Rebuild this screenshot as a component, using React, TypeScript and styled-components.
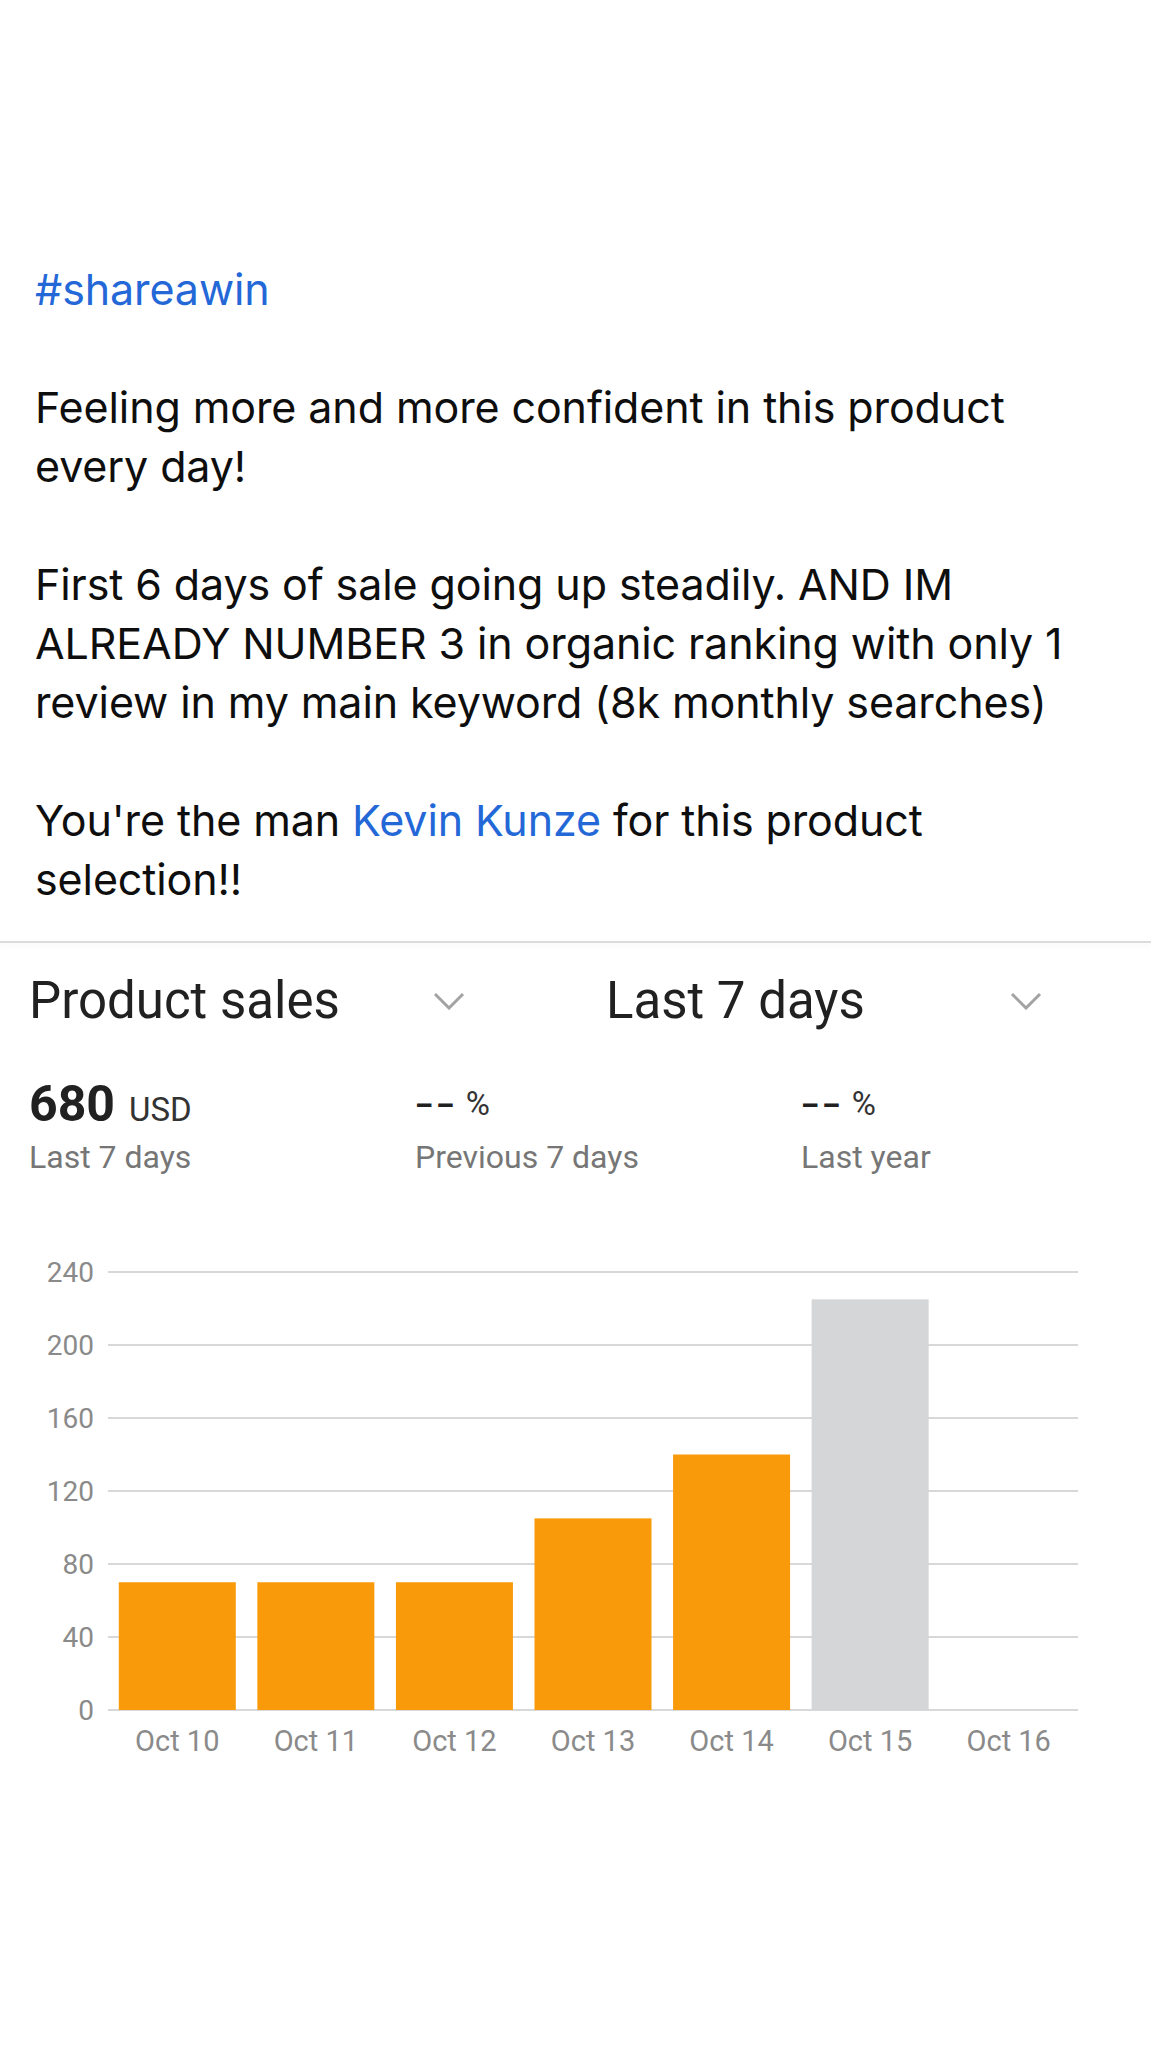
import styled, { createGlobalStyle } from "styled-components";

const GlobalStyle = createGlobalStyle`
  html, body {
    margin: 0;
    padding: 0;
    background: #ffffff;
  }
`;

const Page = styled.div`
  width: 1151px;
  min-height: 2048px;
  background: #ffffff;
`;

const Post = styled.div`
  padding: 260px 35px 0;
  font-family: Inter, "Noto Sans", sans-serif;
  font-size: 43px;
  line-height: 59px;
  color: #0e0e0e;
  letter-spacing: -0.1px;
`;

const Para = styled.p`
  margin: 0 0 59px;
  &:last-child {
    margin-bottom: 0;
  }
`;

const Link = styled.span`
  color: #2468d8;
`;

const Divider = styled.div`
  margin-top: 32px;
  height: 2px;
  background: #dcdcdc;
  box-shadow: 0 3px 5px rgba(0, 0, 0, 0.05);
`;

const Report = styled.section`
  padding: 28px 0 0 29px;
  font-family: Roboto, "Liberation Sans", sans-serif;
`;

const HeaderRow = styled.div`
  display: grid;
  grid-template-columns: 577px 577px;
`;

const Selector = styled.div`
  display: grid;
  grid-template-columns: 404px 32px;
  align-items: center;
  height: 60px;
`;

const SelectorLabel = styled.span`
  font-size: 51px;
  line-height: 60px;
  color: #212121;
`;

const StatsRow = styled.div`
  display: grid;
  grid-template-columns: repeat(3, 386px);
  margin-top: 45px;
`;

const Stat = styled.div`
  display: flex;
  flex-direction: column;
`;

const StatValue = styled.div`
  height: 56px;
  line-height: 56px;
  color: #212121;
  white-space: nowrap;
`;

const Big = styled.span`
  font-size: 50px;
  font-weight: 700;
`;

const Dash = styled.span`
  font-size: 28px;
  font-weight: 900;
  letter-spacing: 4px;
`;

const Unit = styled.span<{ $gap: number }>`
  font-size: 33px;
  margin-left: ${(p) => p.$gap}px;
  color: #333333;
`;

const StatLabel = styled.div`
  margin-top: 5px;
  font-size: 32px;
  line-height: 40px;
  color: #767676;
`;

const ChartWrap = styled.div`
  margin-top: 63px;
  height: 560px;
`;

const Chevron = () => (
  <svg width="32" height="18" viewBox="0 0 32 18">
    <polyline
      points="2,2 16,16 30,2"
      fill="none"
      stroke="#a3a3a3"
      strokeWidth="3"
    />
  </svg>
);

const ticks = [240, 200, 160, 120, 80, 40, 0];
const data = [
  { label: "Oct 10", value: 70, color: "#f99a0a" },
  { label: "Oct 11", value: 70, color: "#f99a0a" },
  { label: "Oct 12", value: 70, color: "#f99a0a" },
  { label: "Oct 13", value: 105, color: "#f99a0a" },
  { label: "Oct 14", value: 140, color: "#f99a0a" },
  { label: "Oct 15", value: 225, color: "#d5d6d8" },
  { label: "Oct 16", value: 0, color: "#d5d6d8" },
];

function SalesChart() {
  const left = 108;
  const right = 1078;
  const top = 32;
  const step = 73;
  const base = top + step * 6;
  const slot = (right - left) / data.length;
  const barW = 117;
  const perUnit = step / 40;

  return (
    <svg width="1151" height="560" viewBox="0 0 1151 560">
      {ticks.map((t, i) => (
        <g key={t}>
          <line
            x1={left}
            x2={right}
            y1={top + i * step}
            y2={top + i * step}
            stroke="#d8d8d8"
            strokeWidth="2"
          />
          <text
            x={94}
            y={top + i * step + 10}
            textAnchor="end"
            fontFamily="Roboto, 'Liberation Sans', sans-serif"
            fontSize="28"
            fill="#8a8a8a"
          >
            {t}
          </text>
        </g>
      ))}
      {data.map((d, i) => {
        const h = d.value * perUnit;
        const cx = left + slot * i + slot / 2;
        return (
          <g key={d.label}>
            {h > 0 && (
              <rect x={cx - barW / 2} y={base - h} width={barW} height={h} fill={d.color} />
            )}
            <text
              x={cx}
              y={511}
              textAnchor="middle"
              fontFamily="Roboto, 'Liberation Sans', sans-serif"
              fontSize="29"
              fill="#8a8a8a"
            >
              {d.label}
            </text>
          </g>
        );
      })}
    </svg>
  );
}

export default function App() {
  return (
    <Page>
      <GlobalStyle />
      <Post>
        <Para>
          <Link>#shareawin</Link>
        </Para>
        <Para>
          Feeling more and more confident in this product
          <br />
          every day!
        </Para>
        <Para>
          First 6 days of sale going up steadily. AND IM
          <br />
          ALREADY NUMBER 3 in organic ranking with only 1
          <br />
          review in my main keyword (8k monthly searches)
        </Para>
        <Para>
          You're the man <Link>Kevin Kunze</Link> for this product
          <br />
          selection!!
        </Para>
      </Post>
      <Divider />
      <Report>
        <HeaderRow>
          <Selector>
            <SelectorLabel>Product sales</SelectorLabel>
            <Chevron />
          </Selector>
          <Selector>
            <SelectorLabel>Last 7 days</SelectorLabel>
            <Chevron />
          </Selector>
        </HeaderRow>
        <StatsRow>
          <Stat>
            <StatValue>
              <Big>680</Big>
              <Unit $gap={14}>USD</Unit>
            </StatValue>
            <StatLabel>Last 7 days</StatLabel>
          </Stat>
          <Stat>
            <StatValue>
              <Dash>––</Dash>
              <Unit $gap={8}>%</Unit>
            </StatValue>
            <StatLabel>Previous 7 days</StatLabel>
          </Stat>
          <Stat>
            <StatValue>
              <Dash>––</Dash>
              <Unit $gap={8}>%</Unit>
            </StatValue>
            <StatLabel>Last year</StatLabel>
          </Stat>
        </StatsRow>
      </Report>
      <ChartWrap>
        <SalesChart />
      </ChartWrap>
    </Page>
  );
}
